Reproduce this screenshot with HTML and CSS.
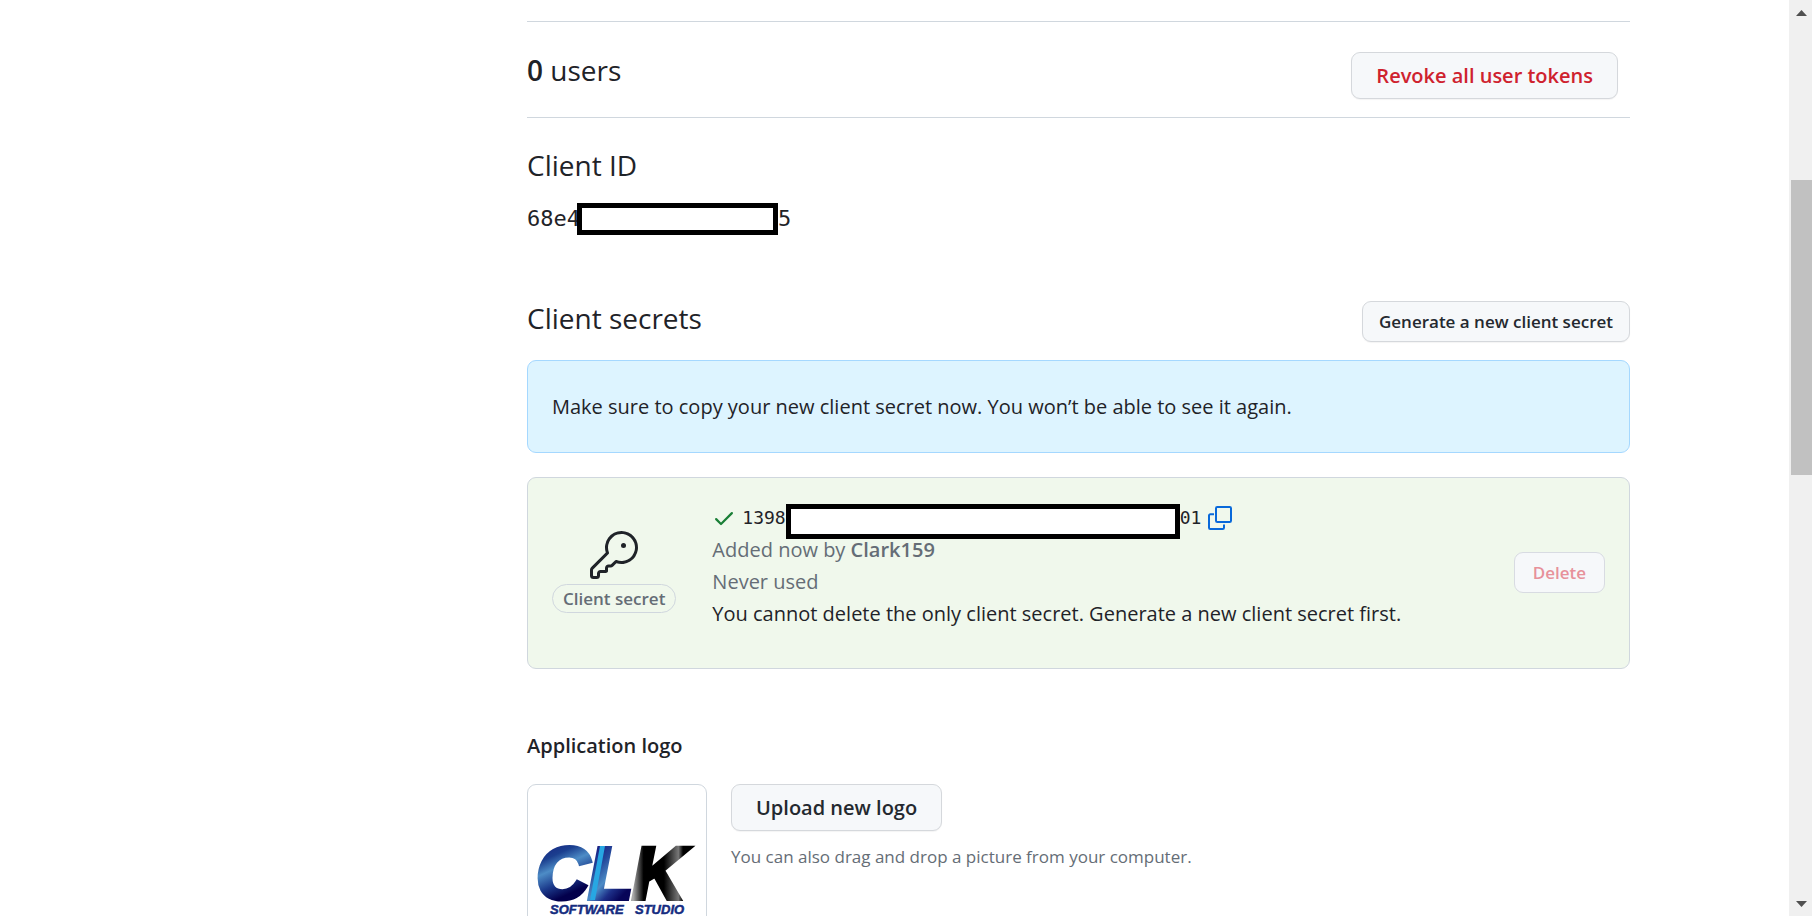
FILE: index.html
```html
<!DOCTYPE html>
<html lang="en">
<head>
<meta charset="utf-8">
<title>OAuth application settings</title>
<link rel="stylesheet" href="styles.css">
</head>
<body>
<div class="viewport">
  <div class="page">
    <main class="settings">
      <section class="users">
        <h2 class="heading"><strong>0</strong> users</h2>
        <button type="button" class="btn btn-large btn-danger">Revoke all user tokens</button>
      </section>

      <section class="client-id">
        <h2 class="heading">Client ID</h2>
        <code class="id-value">68e4<span class="mask mask-id"></span>5</code>
      </section>

      <section class="secrets">
        <div class="secrets-head">
          <h2 class="heading">Client secrets</h2>
          <button type="button" class="btn">Generate a new client secret</button>
        </div>
        <p class="flash">Make sure to copy your new client secret now. You won’t be able to see it again.</p>
        <div class="secret-card">
          <div class="secret-kind">
            <svg class="key" viewBox="0 0 24 24" aria-hidden="true"><path d="M16.75 8.5a1.25 1.25 0 1 0 0-2.5 1.25 1.25 0 0 0 0 2.5Z"/><path d="M15.75 0a8.25 8.25 0 1 1-2.541 16.101l-1.636 1.636a1.744 1.744 0 0 1-1.237.513H9.25a.25.25 0 0 0-.25.25v1.448a.876.876 0 0 1-.256.619l-.214.213a.75.75 0 0 1-.545.22H5.25a.25.25 0 0 0-.25.25v1A1.75 1.75 0 0 1 3.25 24h-1.5A1.75 1.75 0 0 1 0 22.25v-2.836c0-.464.185-.908.513-1.236l7.386-7.388A8.249 8.249 0 0 1 15.75 0ZM9 8.25a6.733 6.733 0 0 0 .463 2.462.75.75 0 0 1-.168.804l-7.722 7.721a.25.25 0 0 0-.073.177v2.836c0 .138.112.25.25.25h1.5a.25.25 0 0 0 .25-.25v-1c0-.966.784-1.75 1.75-1.75H7.5v-1c0-.966.784-1.75 1.75-1.75h1.086a.25.25 0 0 0 .177-.073l1.971-1.972a.75.75 0 0 1 .804-.168A6.75 6.75 0 1 0 9 8.25Z"/></svg>
            <span class="badge">Client secret</span>
          </div>
          <div class="secret-info">
            <div class="secret-line">
              <svg class="check" viewBox="0 0 16 16" aria-hidden="true"><path d="M13.78 4.22a.75.75 0 0 1 0 1.06l-7.25 7.25a.75.75 0 0 1-1.06 0L2.22 9.28a.751.751 0 0 1 .018-1.042.751.751 0 0 1 1.042-.018L6 10.94l6.72-6.72a.75.75 0 0 1 1.060 0Z"/></svg>
              <code class="secret-value">1398<span class="mask mask-secret"></span>01</code>
              <button type="button" class="copy" aria-label="Copy client secret">
                <svg viewBox="0 0 24 24" aria-hidden="true"><path d="M6 8.300H2.300A1.300 1.300 0 0 0 1 9.600v12.100A1.300 1.300 0 0 0 2.300 23h12.400a1.300 1.300 0 0 0 1.300-1.300V18.500"/><rect x="8" y="1" width="15" height="15" rx="1.300"/></svg>
              </button>
            </div>
            <p class="muted">Added now by <strong>Clark159</strong></p>
            <p class="muted">Never used</p>
            <p>You cannot delete the only client secret. Generate a new client secret first.</p>
          </div>
          <button type="button" class="btn btn-danger" disabled>Delete</button>
        </div>
      </section>

      <section class="app-logo">
        <h3 class="subheading">Application logo</h3>
        <div class="logo-row">
          <div class="logo-box">
            <svg viewBox="0 0 178 178" role="img" aria-label="CLK Software Studio">
              <defs>
                <linearGradient id="blue" x1="0" y1="0" x2="0.3" y2="1">
                  <stop offset="0.1" stop-color="#16187c"/><stop offset="0.35" stop-color="#1b3f8f"/><stop offset="0.5" stop-color="#4d8cc6"/><stop offset="0.68" stop-color="#1c3b8c"/><stop offset="0.85" stop-color="#03004c"/>
                </linearGradient>
                <linearGradient id="blueL" x1="0" y1="0" x2="0.6" y2="1">
                  <stop offset="0.2" stop-color="#1a1a80"/><stop offset="0.4" stop-color="#23479a"/><stop offset="0.6" stop-color="#4d8cc6"/><stop offset="0.75" stop-color="#1d2f88"/><stop offset="0.9" stop-color="#070558"/>
                </linearGradient>
                <linearGradient id="steel" x1="0" y1="0" x2="1" y2="0">
                  <stop offset="0.02" stop-color="#aaa"/><stop offset="0.2" stop-color="#000"/><stop offset="0.55" stop-color="#000"/><stop offset="0.8" stop-color="#777"/><stop offset="0.88" stop-color="#000"/>
                </linearGradient>
              </defs>
              <text class="mark" x="8" y="114" fill="url(#blue)" stroke="url(#blue)">C</text>
              <text class="mark" x="60" y="114" fill="url(#blueL)" stroke="url(#blueL)">L</text>
              <path d="M72 61h5L67 115h-5z" fill="#27a7e3"/>
              <text class="mark" x="104" y="114" fill="url(#steel)" stroke="url(#steel)">K</text>
              <text class="tagline" x="22" y="129">SOFTWARE</text>
              <text class="tagline" x="107" y="129">STUDIO</text>
            </svg>
          </div>
          <div class="logo-actions">
            <button type="button" class="btn btn-large">Upload new logo</button>
            <p class="hint">You can also drag and drop a picture from your computer.</p>
          </div>
        </div>
      </section>
    </main>
  </div>
  <div class="scrollbar" aria-hidden="true">
    <svg class="arrow" viewBox="0 0 11 6"><path d="M0 6 5.500 0 11 6z"/></svg>
    <div class="rail"><div class="thumb"></div></div>
    <svg class="arrow" viewBox="0 0 11 6"><path d="M0 0h11L5.500 6z"/></svg>
  </div>
</div>
</body>
</html>
```
FILE: styles.css
```css
* { box-sizing: border-box; }
body {
  margin: 0;
  padding-bottom: 4px;
  height: 100vh;
  background: #fff;
  color: #1f2328;
  font-family: "Open Sans", "Noto Sans", sans-serif;
  font-size: 20px;
  line-height: 32px;
}
p, h2, h3 { margin: 0; }
strong { font-weight: 600; }
.viewport { display: flex; height: 100%; overflow: hidden; }
.page { flex: 1; min-width: 0; }
.settings {
  max-width: 1519px;
  margin: 0 auto;
  padding: 21px 24px 0 392px;
}

.heading { font-size: 28px; font-weight: 400; line-height: 38px; }
.subheading { font-size: 20px; font-weight: 600; line-height: 32px; }

.btn {
  height: 41px;
  padding: 0 16px;
  border: 1px solid #d5d8dc;
  border-radius: 9px;
  background: #f6f8fa;
  box-shadow: 0 1px 1px rgba(31, 35, 40, 0.05);
  color: #24292f;
  font-family: inherit;
  font-size: 17px;
  font-weight: 600;
  white-space: nowrap;
}
.btn-large { height: 47px; padding: 0 24px; font-size: 20px; }
.btn-danger { color: #cf222e; }
.btn:disabled { padding: 0 18px; border-color: #d8dbe2; box-shadow: none; color: #e7919a; }

.users {
  display: flex;
  justify-content: space-between;
  align-items: flex-start;
  height: 97px;
  padding: 30px 12px 0 0;
  border: solid #d0d7de;
  border-width: 1px 0;
}
.users .heading { margin-top: -1px; }

.client-id { padding-top: 28px; }
.id-value {
  display: flex;
  align-items: center;
  margin-top: 19px;
  font: 22px/32px "DejaVu Sans Mono", monospace;
}
.mask { flex: none; border: 5px solid #000; background: #fff; }
.mask-id { width: 201px; height: 32px; margin-left: -3px; }

.secrets { padding-top: 64px; }
.secrets-head { display: flex; justify-content: space-between; margin-bottom: 18px; }
.secrets-head .btn { margin-top: 2px; }
.flash {
  padding: 30px 24px 29px;
  border: 1px solid #a5d8ff;
  border-radius: 9px;
  background: #ddf4ff;
}
.secret-card {
  display: flex;
  align-items: center;
  margin-top: 24px;
  padding: 23px 24px 25px;
  min-height: 192px;
  border: 1px solid #d0d7de;
  border-radius: 9px;
  background: #f0f8ec;
}
.secret-kind { display: flex; flex-direction: column; align-items: center; gap: 5px; }
.key { width: 48px; height: 48px; fill: #1f2328; }
.badge {
  padding: 0 10px;
  border: 1px solid #d0d7de;
  border-radius: 15px;
  color: #656d76;
  font-size: 17px;
  font-weight: 600;
  line-height: 27px;
}
.secret-info { flex: 1; align-self: flex-start; padding: 1px 36px 0; }
.secret-line { display: flex; align-items: center; height: 32px; }
.check { width: 24px; height: 24px; margin-right: 6px; fill: #1a7f37; }
.secret-value {
  display: flex;
  align-items: center;
  height: 32px;
  font: 18px/32px "DejaVu Sans Mono", monospace;
}
.mask-secret { width: 394px; height: 35px; margin-top: 6px; }
.copy { display: flex; margin-left: 7px; padding: 0; border: 0; background: none; }
.copy svg { width: 24px; height: 24px; fill: none; stroke: #0969da; stroke-width: 2; }
.muted { color: #656d76; }

.app-logo { padding-top: 61px; }
.logo-row { display: flex; gap: 24px; margin-top: 22px; }
.logo-box {
  width: 180px;
  height: 180px;
  border: 1px solid #d0d7de;
  border-radius: 9px;
}
.logo-box svg { display: block; }
.mark { font: italic bold 74px "Liberation Sans", sans-serif; stroke-width: 4; }
.tagline { font: italic bold 13px "Liberation Sans", sans-serif; fill: #152c80; stroke: #152c80; stroke-width: 0.5; }
.hint { margin-top: 10px; color: #656d76; font-size: 17px; line-height: 32px; }

.scrollbar {
  display: flex;
  flex-direction: column;
  align-items: center;
  width: 23px;
  padding: 10px 0 9px 2px;
  background: #f0f0f0;
}
.arrow { width: 11px; height: 6px; fill: #505050; }
.rail { flex: 1; width: 100%; padding: 164px 0; }
.thumb { height: 53%; background: #c1c1c1; }
```
